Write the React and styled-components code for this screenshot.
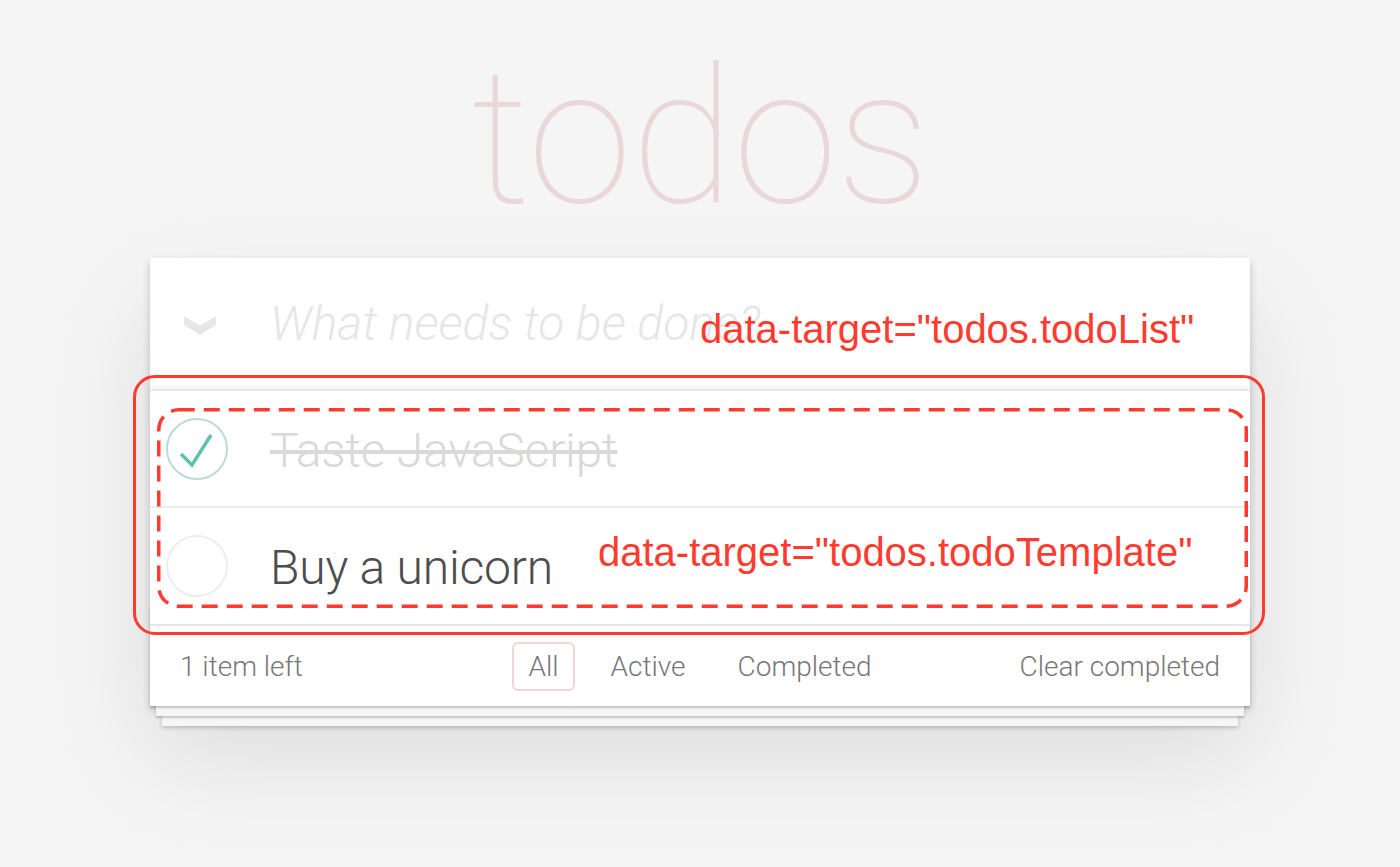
import React from "react";
import styled, { createGlobalStyle } from "styled-components";

const sans = `Roboto, "Helvetica Neue", Helvetica, Arial, sans-serif`;
const red = "#ff3b30";

const GlobalStyle = createGlobalStyle`
  html, body {
    margin: 0;
    padding: 0;
    background: #f5f5f5;
  }
  body {
    font-family: ${sans};
    font-weight: 300;
    color: #4d4d4d;
    -webkit-font-smoothing: antialiased;
  }
  * { box-sizing: border-box; }
`;

const Page = styled.div`
  display: flex;
  flex-direction: column;
  align-items: center;
  padding-top: 38px;
  min-height: 867px;
`;

const Title = styled.h1`
  margin: 0 0 20px;
  height: 200px;
  font-family: ${sans};
  font-size: 189px;
  line-height: 200px;
  font-weight: 100;
  letter-spacing: -1px;
  color: rgba(175, 47, 47, 0.15);
  text-align: center;
`;

const Card = styled.section`
  position: relative;
  width: 1100px;
  background: #fff;
  box-shadow: 0 4px 8px 0 rgba(0, 0, 0, 0.2), 0 50px 100px 0 rgba(0, 0, 0, 0.1);
`;

const Header = styled.header`
  display: flex;
  align-items: center;
  height: 131px;
  padding-left: 34px;
  box-shadow: inset 0 -4px 2px rgba(0, 0, 0, 0.03);
`;

const ToggleAll = styled.svg`
  flex: none;
  width: 32px;
  height: 20px;
  margin-top: 4px;
  fill: #e6e6e6;
`;

const NewTodo = styled.input`
  flex: 1;
  min-width: 0;
  margin-left: 54px;
  border: 0;
  outline: none;
  background: transparent;
  font-family: ${sans};
  font-size: 48px;
  font-weight: 300;
  color: #4d4d4d;
  padding: 0;
  &::placeholder {
    font-style: italic;
    font-weight: 300;
    color: #e6e6e6;
  }
`;

const Main = styled.section`
  border-top: 2px solid #e6e6e6;
`;

const TodoList = styled.ul`
  margin: 0;
  padding: 0;
  list-style: none;
`;

const Item = styled.li`
  display: flex;
  align-items: center;
  height: ${(p) => (p.$last ? 116 : 117)}px;
  padding-left: 16px;
  border-bottom: ${(p) => (p.$last ? "none" : "2px solid #ededed")};
`;

const Check = styled.svg`
  flex: none;
  width: 62px;
  height: 62px;
`;

const Label = styled.span`
  margin-left: 42px;
  padding-top: 4px;
  font-size: 48px;
  line-height: 56px;
  font-weight: 300;
  letter-spacing: -0.2px;
  color: ${(p) => (p.$done ? "#d9d9d9" : "#4d4d4d")};
  text-decoration: ${(p) => (p.$done ? "line-through" : "none")};
`;

const Footer = styled.footer`
  position: relative;
  display: grid;
  grid-template-columns: 1fr auto 1fr;
  align-items: center;
  height: 82px;
  padding: 0 30px;
  border-top: 2px solid #e6e6e6;
  font-size: 28px;
  color: #777;

  &::before {
    content: "";
    position: absolute;
    left: 0;
    right: 0;
    bottom: 0;
    height: 100px;
    overflow: hidden;
    pointer-events: none;
    box-shadow: 0 2px 2px rgba(0, 0, 0, 0.2), 0 16px 0 -6px #f6f6f6,
      0 18px 2px -6px rgba(0, 0, 0, 0.2), 0 32px 0 -12px #f6f6f6,
      0 34px 4px -12px rgba(0, 0, 0, 0.2);
  }
`;

const Count = styled.span`
  justify-self: start;
`;

const Filters = styled.ul`
  display: flex;
  gap: 20px;
  margin: 0;
  padding: 0;
  list-style: none;
`;

const Filter = styled.li`
  height: 49px;
  display: flex;
  align-items: center;
  padding: 0 14px;
  border: 2px solid ${(p) => (p.$selected ? "rgba(175, 47, 47, 0.2)" : "transparent")};
  border-radius: 6px;
`;

const Clear = styled.span`
  justify-self: end;
`;

const SolidFrame = styled.div`
  position: absolute;
  left: -17px;
  top: 117px;
  width: 1132px;
  height: 260px;
  border: 3px solid ${red};
  border-radius: 22px;
  pointer-events: none;
`;

const DashedFrame = styled.svg`
  position: absolute;
  left: 7px;
  top: 150px;
  width: 1091px;
  height: 200px;
  overflow: visible;
  pointer-events: none;
`;

const Note = styled.span`
  position: absolute;
  left: ${(p) => p.$x}px;
  top: ${(p) => p.$y}px;
  font-family: "Liberation Sans", Arial, sans-serif;
  font-size: 40px;
  line-height: 40px;
  font-weight: 400;
  color: ${red};
  white-space: nowrap;
`;

const CheckBox = ({ done }) => (
  <Check viewBox="0 0 62 62">
    <circle cx="31" cy="31" r="30" fill="none" stroke={done ? "#bddad5" : "#ededed"} strokeWidth="2" />
    {done && (
      <polyline points="15,36 26,47 45,17" fill="none" stroke="#5dc2af" strokeWidth="3.5" />
    )}
  </Check>
);

const todos = [
  { title: "Taste JavaScript", done: true },
  { title: "Buy a unicorn", done: false },
];

export default function App() {
  return (
    <>
      <GlobalStyle />
      <Page>
        <Title>todos</Title>
        <Card>
          <Header>
            <ToggleAll viewBox="0 0 32 20">
              <polygon points="0,0 16,9.5 32,0 32,9 16,19 0,9" />
            </ToggleAll>
            <NewTodo placeholder="What needs to be done?" readOnly />
          </Header>
          <Main>
            <TodoList>
              {todos.map((todo, idx) => (
                <Item key={`todo${idx}`} $last={idx === todos.length - 1}>
                  <CheckBox done={todo.done} />
                  <Label $done={todo.done}>{todo.title}</Label>
                </Item>
              ))}
            </TodoList>
          </Main>
          <Footer>
            <Count>1 item left</Count>
            <Filters>
              <Filter $selected>All</Filter>
              <Filter>Active</Filter>
              <Filter>Completed</Filter>
            </Filters>
            <Clear>Clear completed</Clear>
          </Footer>

          <SolidFrame />
          <DashedFrame viewBox="0 0 1091 200">
            <rect
              x="1.75"
              y="1.75"
              width="1087.5"
              height="196.5"
              rx="20"
              fill="none"
              stroke={red}
              strokeWidth="3.5"
              strokeDasharray="16 9"
            />
          </DashedFrame>
          <Note $x={550} $y={51}>data-target="todos.todoList"</Note>
          <Note $x={448} $y={274}>data-target="todos.todoTemplate"</Note>
        </Card>
      </Page>
    </>
  );
}
